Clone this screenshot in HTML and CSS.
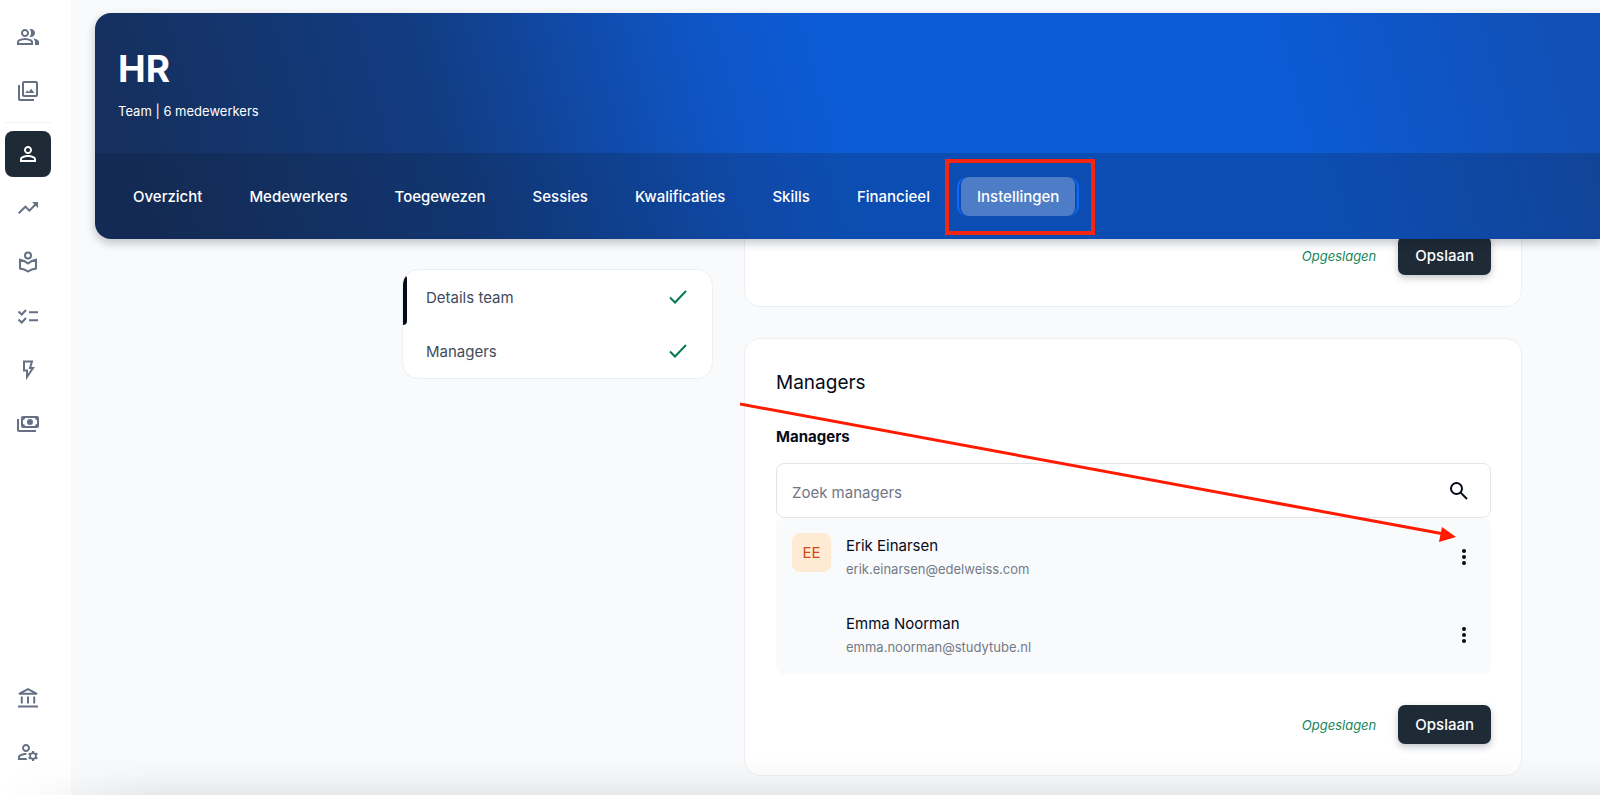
FILE: index.html
```html
<!DOCTYPE html>
<html lang="nl">
<head>
    <meta charset="UTF-8">
    <meta name="viewport" content="width=device-width, initial-scale=1.0">
    <title>HR</title>
    <link rel="stylesheet" href="styles.css">
</head>
<body>
    <div class="app">
        <nav class="sidebar">
            <a class="side-link" href="#">
                <svg class="icon" viewBox="0 -960 960 960"><path d="M40-160v-112q0-34 17.5-62.5T104-378q62-31 126-46.5T360-440q66 0 130 15.5T616-378q29 15 46.5 43.5T680-272v112H40Zm720 0v-120q0-44-24.5-84.5T666-434q51 6 96 20.5t84 35.5q36 20 55 44.5t19 53.5v120H760ZM360-480q-66 0-113-47t-47-113q0-66 47-113t113-47q66 0 113 47t47 113q0 66-47 113t-113 47Zm400-160q0 66-47 113t-113 47q-11 0-28-2.5t-28-5.5q27-32 41.5-71t14.5-81q0-42-14.5-81T544-792q14-5 28-6.5t28-1.5q66 0 113 47t47 113ZM120-240h480v-32q0-11-5.5-20T580-306q-54-27-109-40.5T360-360q-56 0-111 13.5T140-306q-9 5-14.5 14t-5.5 20v32Zm240-320q33 0 56.5-23.5T440-640q0-33-23.5-56.5T360-720q-33 0-56.5 23.5T280-640q0 33 23.5 56.5T360-560Z"/></svg>
            </a>
            <a class="side-link" href="#">
                <svg class="icon" viewBox="0 0 24 24"><path d="M20 4v12H8V4h12m0-2H8c-1.100 0-2 .9-2 2v12c0 1.100.9 2 2 2h12c1.100 0 2-.9 2-2V4c0-1.100-.9-2-2-2zM9.300 14l2-2.700 1.500 1.800 2.300-3.400L18.500 14zM2 6v14c0 1.100.9 2 2 2h14v-2H4V6H2z"/></svg>
            </a>
            <hr class="side-line">
            <a class="side-link active" href="#">
                <svg class="icon" viewBox="0 0 24 24"><path d="M12 5.900c1.160 0 2.100.94 2.100 2.100s-.94 2.100-2.100 2.100S9.900 9.160 9.900 8s.94-2.100 2.100-2.100m0 9c2.970 0 6.100 1.460 6.100 2.100v1.100H5.900V17c0-.64 3.130-2.100 6.100-2.100M12 4C9.790 4 8 5.790 8 8s1.790 4 4 4 4-1.790 4-4-1.790-4-4-4zm0 9c-2.670 0-8 1.340-8 4v3h16v-3c0-2.660-5.330-4-8-4z"/></svg>
            </a>
            <a class="side-link" href="#">
                <svg class="icon" viewBox="0 0 24 24"><path d="M16 6l2.290 2.290-4.880 4.880-4-4L2 16.590 3.410 18l6-6 4 4 6.300-6.290L22 12V6z"/></svg>
            </a>
            <a class="side-link" href="#">
                <svg class="icon line" viewBox="0 0 24 24"><circle cx="12" cy="5.500" r="3"/><path d="M4 9.700q4.500.6 8 3.800 3.500-3.200 8-3.800v8.800q-4.500.5-8 3-3.500-2.500-8-3z"/></svg>
            </a>
            <a class="side-link" href="#">
                <svg class="icon line" viewBox="0 0 24 24"><path d="M2.500 7.500l3.200 3L10 6M2.500 15.500l3.200 3L10 14M13 8.300h9M13 16.300h9"/></svg>
            </a>
            <a class="side-link" href="#">
                <svg class="icon line" viewBox="0 0 24 24"><path d="M8 3.500h8l-2 6.500h3l-6 9v-6.500H8z"/></svg>
            </a>
            <a class="side-link" href="#">
                <svg class="icon" viewBox="0 0 24 24"><path fill-rule="evenodd" d="M7 4h14a2 2 0 0 1 2 2v8a2 2 0 0 1-2 2H7a2 2 0 0 1-2-2V6a2 2 0 0 1 2-2zm2 2a2 2 0 0 1-2 2v4a2 2 0 0 1 2 2h10a2 2 0 0 1 2-2V8a2 2 0 0 1-2-2z"/><circle cx="14" cy="10" r="3"/><path d="M1 7h2v11h17v2H3a2 2 0 0 1-2-2z"/></svg>
            </a>
            <a class="side-link side-bottom" href="#">
                <svg class="icon line" viewBox="0 0 24 24"><path d="M12 3.100L3 7.800h18zM5.800 10.500v7M12 10.500v7M18.200 10.500v7M2 20.500h20"/></svg>
            </a>
            <a class="side-link" href="#">
                <svg class="icon" viewBox="0 0 24 24"><path d="M4 18v-.65c0-.34.16-.66.41-.81C6.100 15.530 8.030 15 10 15c.03 0 .05 0 .08.01.1-.7.3-1.370.59-1.980-.22-.02-.44-.03-.67-.03-2.420 0-4.680.67-6.610 1.820-.88.52-1.390 1.500-1.390 2.530V20h9.260c-.42-.6-.75-1.280-.97-2H4zM10 12c2.210 0 4-1.790 4-4s-1.790-4-4-4-4 1.790-4 4 1.790 4 4 4zm0-6c1.100 0 2 .9 2 2s-.9 2-2 2-2-.9-2-2 .9-2 2-2zM20.750 16c0-.22-.03-.42-.06-.63l1.140-1.010-1-1.730-1.450.49c-.32-.27-.68-.48-1.080-.63L18 11h-2l-.3 1.490c-.4.15-.76.36-1.080.63l-1.450-.49-1 1.730 1.140 1.010c-.03.21-.06.41-.06.63s.03.42.06.63l-1.140 1.010 1 1.730 1.450-.49c.32.27.68.48 1.080.63L16 21h2l.3-1.490c.4-.15.76-.36 1.080-.63l1.450.49 1-1.730-1.140-1.010c.03-.21.06-.41.06-.63zM17 18c-1.100 0-2-.9-2-2s.9-2 2-2 2 .9 2 2-.9 2-2 2z"/></svg>
            </a>
        </nav>

        <main class="main">
            <header class="team-header">
                <div class="team-title">
                    <h1>HR</h1>
                    <p>Team | 6 medewerkers</p>
                </div>
                <nav class="tabs">
                    <a class="tab" href="#">Overzicht</a>
                    <a class="tab" href="#">Medewerkers</a>
                    <a class="tab" href="#">Toegewezen</a>
                    <a class="tab" href="#">Sessies</a>
                    <a class="tab" href="#">Kwalificaties</a>
                    <a class="tab" href="#">Skills</a>
                    <a class="tab" href="#">Financieel</a>
                    <a class="tab active" href="#">Instellingen</a>
                </nav>
            </header>

            <div class="content">
                <nav class="steps">
                    <a class="step current" href="#details">Details team
                        <svg class="check" viewBox="0 0 18 14"><path d="M1 7.500l5 5L17 1"/></svg>
                    </a>
                    <a class="step" href="#managers">Managers
                        <svg class="check" viewBox="0 0 18 14"><path d="M1 7.500l5 5L17 1"/></svg>
                    </a>
                </nav>

                <div class="cards">
                    <section class="card card-details" id="details">
                        <div class="card-footer">
                            <span class="saved">Opgeslagen</span>
                            <button class="save" type="button">Opslaan</button>
                        </div>
                    </section>

                    <section class="card" id="managers">
                        <h2>Managers</h2>
                        <label class="field-label" for="search">Managers</label>
                        <div class="search">
                            <input type="text" id="search" placeholder="Zoek managers">
                            <svg class="search-icon" viewBox="0 0 18 18"><circle cx="6.500" cy="6.500" r="5.500"/><path d="M10.500 10.500l6.500 6.500"/></svg>
                        </div>
                        <ul class="people">
                            <li class="person">
                                <span class="avatar">EE</span>
                                <div class="person-text">
                                    <span class="name">Erik Einarsen</span>
                                    <span class="mail">erik.einarsen@edelweiss.com</span>
                                </div>
                                <button class="more" type="button" aria-label="Meer">
                                    <svg viewBox="0 0 4 16"><circle cx="2" cy="2" r="2"/><circle cx="2" cy="8" r="2"/><circle cx="2" cy="14" r="2"/></svg>
                                </button>
                            </li>
                            <li class="person">
                                <span class="avatar empty"></span>
                                <div class="person-text">
                                    <span class="name">Emma Noorman</span>
                                    <span class="mail">emma.noorman@studytube.nl</span>
                                </div>
                                <button class="more" type="button" aria-label="Meer">
                                    <svg viewBox="0 0 4 16"><circle cx="2" cy="2" r="2"/><circle cx="2" cy="8" r="2"/><circle cx="2" cy="14" r="2"/></svg>
                                </button>
                            </li>
                        </ul>
                        <div class="card-footer">
                            <span class="saved">Opgeslagen</span>
                            <button class="save" type="button">Opslaan</button>
                        </div>
                        <svg class="arrow" viewBox="0 0 720 144"><path class="arrow-line" d="M0 4L704 134"/><path class="arrow-head" d="M716 137L702 127L699 142z"/></svg>
                    </section>
                </div>
            </div>
        </main>
    </div>
    <div class="bottom-fade"></div>
</body>
</html>
```
FILE: styles.css
```css
* {
    box-sizing: border-box;
}
body {
    margin: 0;
    background: #f9fafc;
    color: #060b1a;
    font-family: Inter, "Liberation Sans", sans-serif;
    font-size: 15px;
    overflow: hidden;
}
a {
    color: inherit;
    text-decoration: none;
}
.app {
    display: flex;
    height: 100vh;
}

/* left icon bar */
.sidebar {
    width: 71px;
    flex: none;
    display: flex;
    flex-direction: column;
    gap: 8px;
    padding: 14px 20px 20px 5px;
    background: #fff;
}
.side-link {
    display: flex;
    align-items: center;
    justify-content: center;
    height: 46px;
    border-radius: 8px;
    color: #667085;
}
.side-link.active {
    background: #1e2a36;
    color: #fff;
}
.side-line {
    width: 100%;
    margin: 0;
    border: 0;
    border-top: 1px solid #f0f2f4;
}
.side-bottom {
    margin-top: auto;
}
.icon {
    width: 24px;
    height: 24px;
    fill: currentColor;
}
.icon.line {
    fill: none;
    stroke: currentColor;
    stroke-width: 2;
}

/* blue team header */
.main {
    flex: 1;
    min-width: 0;
    padding: 13px 0 0 24px;
}
.team-header {
    position: relative;
    z-index: 2;
    border-radius: 16px 0 0 16px;
    background: linear-gradient(75deg, #15305f 4%, #123c82 24%, #0f55c6 42%, #0c5bd6 50%, #0c5bd6 78%, #124fb4 98%);
    box-shadow: 0 4px 10px rgba(15, 23, 42, 0.25);
    color: #fff;
    overflow: hidden;
}
.team-title {
    height: 140px;
    padding: 32px 23px;
}
.team-title h1 {
    margin: 0;
    font-size: 37px;
    line-height: 48px;
    font-weight: 700;
}
.team-title p {
    margin: 8px 0 0;
    font-size: 13px;
    line-height: 20px;
}
.tabs {
    display: flex;
    align-items: center;
    gap: 15px;
    height: 86px;
    padding: 0 22px;
    background: rgba(15, 23, 42, 0.2);
}
.tab {
    position: relative;
    padding: 0 16px;
    border-radius: 8px;
    line-height: 39px;
    font-weight: 500;
}
.tab.active {
    background: rgba(255, 255, 255, 0.27);
}
/* focus ring, only visible on the sides */
.tab.active::before {
    content: "";
    position: absolute;
    inset: 0 -4px;
    border: solid #0a6cff;
    border-width: 0 2px;
    border-radius: 10px;
}
.tab.active::after {
    content: "";
    position: absolute;
    inset: -18px -20px -19px -16px;
    border: 4px solid #f5260f;
}

/* settings */
.content {
    display: grid;
    grid-template-columns: 311px minmax(0, 1fr);
    align-items: start;
    gap: 31px;
    padding: 0 78px 0 307px;
}
.steps {
    margin-top: 30px;
    border: 1px solid #eceff3;
    border-radius: 16px;
    background: #fff;
    overflow: hidden;
}
.step {
    position: relative;
    display: flex;
    align-items: center;
    justify-content: space-between;
    height: 54px;
    padding: 0 25px 0 23px;
    color: #414b5c;
}
.step.current::before {
    content: "";
    position: absolute;
    top: 5px;
    left: 0;
    width: 4px;
    height: 50px;
    border-radius: 0 4px 4px 0;
    background: #060b1a;
}
.check {
    width: 18px;
    height: 14px;
    fill: none;
    stroke: #067a50;
    stroke-width: 2;
}
.card {
    position: relative;
    margin-bottom: 31px;
    padding: 30px 30px 31px 31px;
    border: 1px solid #eceff3;
    border-radius: 16px;
    background: #fff;
}
.card-details {
    margin-top: -34px;
}
.card h2 {
    margin: 0;
    font-size: 19px;
    line-height: 28px;
    font-weight: 400;
}
.field-label {
    display: block;
    margin: 30px 0 16px;
    line-height: 20px;
    font-weight: 700;
}
.search {
    display: flex;
    align-items: center;
    height: 55px;
    padding: 0 22px 0 15px;
    border: 1px solid #e3e5ea;
    border-radius: 8px;
}
.search input {
    flex: 1;
    min-width: 0;
    padding: 3px 0 0;
    border: 0;
    outline: 0;
    background: none;
    font: inherit;
}
.search input::placeholder {
    color: #6f7686;
}
.search-icon {
    width: 18px;
    height: 18px;
    fill: none;
    stroke: #060b1a;
    stroke-width: 2;
}
.people {
    margin: 0;
    padding: 0;
    list-style: none;
    border-radius: 8px;
    background: #f8fafc;
}
.person {
    display: flex;
    align-items: flex-start;
    height: 78px;
    padding: 15px 25px 0 16px;
}
.person:first-child {
    border-bottom: 1px solid #f5f7f9;
}
.avatar {
    width: 39px;
    height: 39px;
    margin-right: 15px;
    border-radius: 8px;
    background: #ffebd3;
    color: #d0481f;
    line-height: 40px;
    text-align: center;
}
.avatar.empty {
    background: none;
}
.person-text {
    display: flex;
    flex-direction: column;
    flex: 1;
}
.name {
    line-height: 25px;
}
.mail {
    color: #737a89;
    font-size: 13px;
    line-height: 22px;
}
.more {
    margin: 16px 0 0;
    padding: 0;
    border: 0;
    background: none;
}
.more svg {
    display: block;
    width: 4px;
    height: 16px;
    fill: #060b1a;
}
.card-footer {
    display: flex;
    align-items: center;
    justify-content: flex-end;
    gap: 22px;
}
.people + .card-footer {
    margin-top: 31px;
}
.saved {
    color: #16865c;
    font-size: 13px;
    font-style: italic;
}
.save {
    height: 39px;
    padding: 0 17px;
    border: 0;
    border-radius: 7px;
    background: #1e2a36;
    box-shadow: 0 3px 7px rgba(15, 23, 42, 0.25);
    color: #fff;
    font: inherit;
    font-weight: 500;
}

/* pointer to the row menu */
.arrow {
    position: absolute;
    top: 61px;
    left: -5px;
    width: 720px;
    height: 144px;
}
.arrow-line {
    stroke: #ff1a00;
    stroke-width: 3;
}
.arrow-head {
    fill: #ff1a00;
}
.bottom-fade {
    position: fixed;
    inset: auto 0 0;
    z-index: 3;
    height: 40px;
    background: linear-gradient(to bottom, rgba(0, 0, 0, 0), rgba(0, 0, 0, 0.02) 50%, rgba(0, 0, 0, 0.07));
    -webkit-mask-image: linear-gradient(to right, transparent, #000 160px);
    mask-image: linear-gradient(to right, transparent, #000 160px);
    pointer-events: none;
}
```
